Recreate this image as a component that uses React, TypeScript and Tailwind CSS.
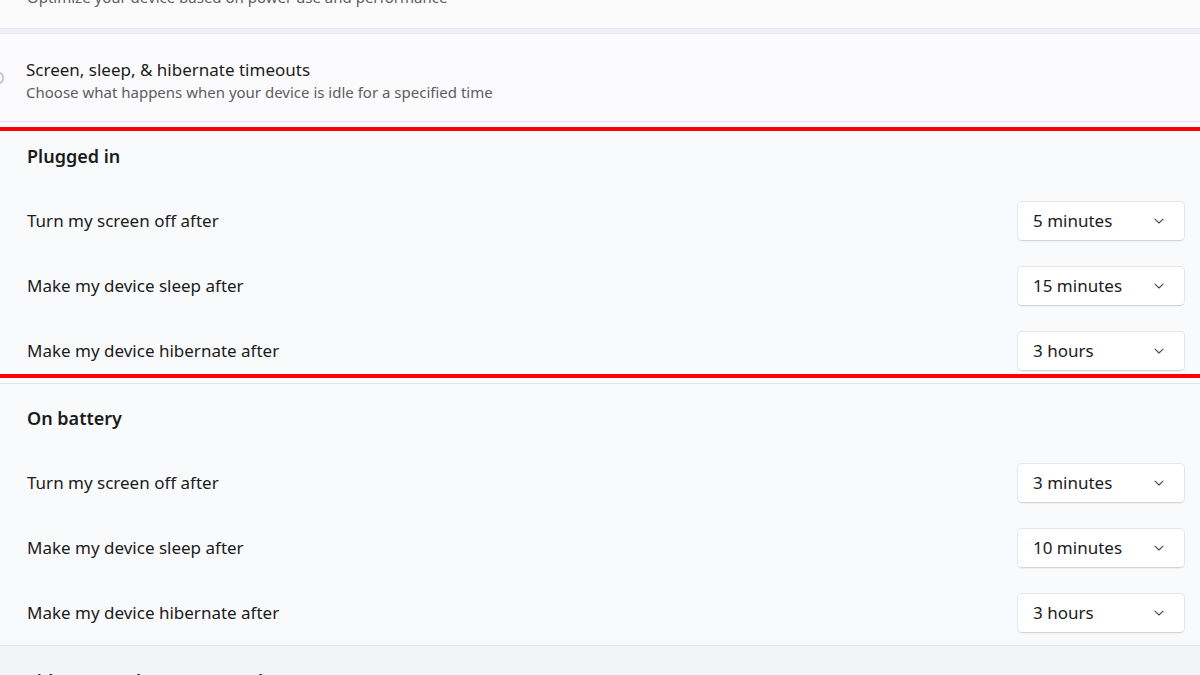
import React from "react";

const font = { fontFamily: '"Noto Sans", "Segoe UI", sans-serif' };

const Chevron = () => (
  <svg width="12" height="12" viewBox="0 0 12 12" fill="none">
    <path d="M2 4.2 L6 8 L10 4.2" stroke="#4a4a4a" strokeWidth="1.1" strokeLinecap="round" strokeLinejoin="round" />
  </svg>
);

const Row = ({ label, value }: { label: string; value: string }) => (
  <div className="h-[65px] flex items-center justify-between pl-[27px] pr-[15px]">
    <p className="text-[17px] text-[#1b1b1b]">{label}</p>
    <div className="w-[168px] h-[40px] bg-white rounded-[5px] border border-[#e6e6e6] border-b-[#d4d4d4] shadow-[0_1px_1px_rgba(0,0,0,0.04)] flex items-center justify-between pl-[15px] pr-[19px]">
      <span className="text-[17px] text-[#1b1b1b]">{value}</span>
      <Chevron />
    </div>
  </div>
);

const Section = ({ title, rows }: { title: string; rows: [string, string][] }) => (
  <div className="border-b border-[#e3e5e8]">
    <div className="h-[66px] pl-[27px] pt-[22px]">
      <p className="text-[18px] leading-[24px] font-semibold text-[#1b1b1b]">{title}</p>
    </div>
    {rows.map(([l, v]) => (
      <Row key={l} label={l} value={v} />
    ))}
  </div>
);

export default function App() {
  return (
    <div style={font} className="relative w-[1200px] h-[675px] overflow-hidden bg-[#f9fafc]">
      <div className="h-[29px] overflow-hidden bg-[#fbfbfc] border-b border-[#e3e6ea]">
        <p className="pl-[27px] mt-[-13px] text-[15px] leading-[20px] text-[#5d5d5d]">
          Optimize your device based on power use and performance
        </p>
      </div>
      <div className="h-[4px] bg-[#eef1f5]" />
      <div className="h-[89px] bg-[#fbfbfd] border-t border-[#e6eaef] border-b border-b-[#e3e3e3] flex items-center relative">
        <div className="absolute left-[-6px] top-[38px] w-[10px] h-[12px] rounded-full border-2 border-[#c9c9c9]" />
        <div className="pl-[26px] pt-[4px]">
          <p className="text-[17px] leading-[24px] text-[#1b1b1b]">Screen, sleep, &amp; hibernate timeouts</p>
          <p className="text-[15px] leading-[20px] text-[#5d5d5d]">Choose what happens when your device is idle for a specified time</p>
        </div>
      </div>
      <Section
        title="Plugged in"
        rows={[
          ["Turn my screen off after", "5 minutes"],
          ["Make my device sleep after", "15 minutes"],
          ["Make my device hibernate after", "3 hours"],
        ]}
      />
      <Section
        title="On battery"
        rows={[
          ["Turn my screen off after", "3 minutes"],
          ["Make my device sleep after", "10 minutes"],
          ["Make my device hibernate after", "3 hours"],
        ]}
      />
      <div className="h-[40px] bg-[#f2f4f7] pl-[27px] pt-[23px]">
        <p className="text-[18px] leading-[24px] font-semibold text-[#1b1b1b]">Lid &amp; power button controls</p>
      </div>
      <div className="absolute left-0 right-0 top-[127px] h-[4px] bg-[#ff0000]" />
      <div className="absolute left-0 right-0 top-[374px] h-[4px] bg-[#ff0000]" />
    </div>
  );
}
